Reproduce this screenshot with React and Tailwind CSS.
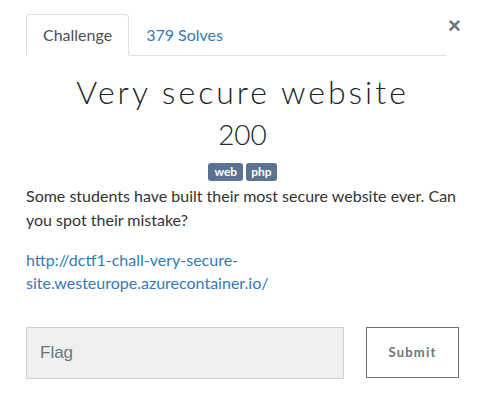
export default function App() {
  return (
    <div className="w-[480px] h-[402px] bg-white font-['Lato','Liberation_Sans',sans-serif] text-[#212529] overflow-hidden">
      {/* header: tabs + close */}
      <div className="flex items-start pt-[14px] pl-[26px] pr-[20px]">
        <ul className="flex flex-1 border-b border-[#dee2e6] h-[42px]">
          <li className="h-[42px] px-[16px] flex items-center border border-[#dee2e6] border-b-white rounded-t-[4px] bg-white text-[16px] text-[#495057]">
            Challenge
          </li>
          <li className="h-[41px] px-[17px] flex items-center text-[16px] text-[#337ab7]">
            379 Solves
          </li>
        </ul>
        <button className="ml-[2px] mt-[4px] w-[12px] text-[22px] leading-[16px] font-bold text-[#6c757d] font-['Liberation_Sans',sans-serif]">
          ×
        </button>
      </div>

      {/* body */}
      <div className="pl-[26px] pr-[21px]">
        <h2 className="mt-[17px] text-center text-[32px] leading-[38px] font-light tracking-[3px] text-[#212529]">
          Very secure website
        </h2>
        <h3 className="mt-[6px] text-center text-[28px] leading-[34px] font-light text-[#212529]">
          200
        </h3>
        <div className="mt-[12px] flex justify-center gap-[3px]">
          <span className="h-[18px] px-[6px] rounded-[3px] bg-[#5b7292] text-white text-[12px] font-bold leading-[18px]">
            web
          </span>
          <span className="h-[18px] px-[5px] rounded-[3px] bg-[#5b7292] text-white text-[12px] font-bold leading-[18px]">
            php
          </span>
        </div>
        <p className="mt-[3px] text-[16px] leading-[24px] text-[#333]">
          Some students have built their most secure website ever. Can you spot their mistake?
        </p>
        <p className="mt-[16px] text-[16px] leading-[23px]">
          <a className="text-[#337ab7]" href="#">
            http://dctf1-chall-very-secure-
            <br />
            site.westeurope.azurecontainer.io/
          </a>
        </p>
        <div className="mt-[33px] flex items-start">
          <input
            className="w-[318px] h-[52px] bg-[#efefef] border border-[#ccd0d4] px-[13px] text-[17px] font-['Liberation_Sans',sans-serif] placeholder:text-[#6c757d] outline-none"
            placeholder="Flag"
          />
          <button className="ml-[22px] w-[93px] h-[51px] border border-[#6c757d] text-[13px] font-bold tracking-[1.2px] text-[#6c757d]">
            Submit
          </button>
        </div>
      </div>
    </div>
  );
}
